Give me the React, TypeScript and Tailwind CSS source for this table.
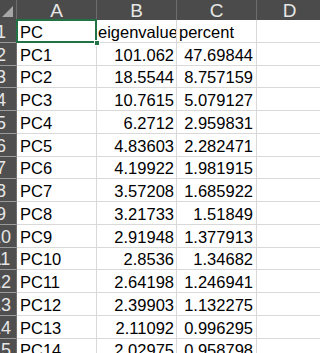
import React from "react";

const rows: [string, string, string][] = [
  ["PC", "eigenvalue", "percent"],
  ["PC1", "101.062", "47.69844"],
  ["PC2", "18.5544", "8.757159"],
  ["PC3", "10.7615", "5.079127"],
  ["PC4", "6.2712", "2.959831"],
  ["PC5", "4.83603", "2.282471"],
  ["PC6", "4.19922", "1.981915"],
  ["PC7", "3.57208", "1.685922"],
  ["PC8", "3.21733", "1.51849"],
  ["PC9", "2.91948", "1.377913"],
  ["PC10", "2.8536", "1.34682"],
  ["PC11", "2.64198", "1.246941"],
  ["PC12", "2.39903", "1.132275"],
  ["PC13", "2.11092", "0.996295"],
  ["PC14", "2.02975", "0.958798"],
];

export default function App() {
  return (
    <div
      className="w-[320px] h-[353px] overflow-hidden bg-white text-black"
      style={{ fontFamily: '"Liberation Sans", Arial, sans-serif' }}
    >
      {/* column header */}
      <div className="flex h-[20px] bg-[#4b4b4b] text-[#e6e6e6] text-[19px] leading-[21px]">
        <div className="relative w-[17px] shrink-0 border-r border-[#6e6e6e]">
          <div className="absolute right-[3px] bottom-[3px] w-0 h-0 border-l-[11px] border-l-transparent border-b-[11px] border-b-[#a6a6a6]" />
        </div>
        {["A", "B", "C"].map((c) => (
          <div
            key={c}
            className="w-[80px] shrink-0 border-r border-[#6e6e6e] text-center"
          >
            {c}
          </div>
        ))}
        <div className="flex-1 text-center pl-[2px]">D</div>
      </div>
      {rows.map((r, i) => (
        <div key={i} className="flex h-[22.77px] text-[16.5px] leading-[20px]">
          <div className="relative w-[17px] shrink-0 overflow-hidden bg-[#4f4f4f] border-r border-[#6e6e6e] border-b border-b-[#9a9a9a]">
            <div className="absolute left-[-15px] w-[32px] top-0 h-full flex items-end justify-center text-[#e6e6e6] text-[18px]">
              {i + 1}
            </div>
          </div>
          <div className="relative w-[80px] shrink-0 border-r border-b border-[#d9d9d9] flex items-end pl-[3px] whitespace-nowrap">
            {r[0]}
            {i === 0 && (
              <>
                <div className="absolute left-[-1px] top-[-1px] right-[-1px] bottom-[-1px] border-2 border-[#217346] pointer-events-none" />
                <div className="absolute right-[-4px] bottom-[-4px] w-[6px] h-[6px] bg-[#217346] border border-white z-10" />
              </>
            )}
          </div>
          <div
            className={
              "w-[80px] shrink-0 border-r border-b border-[#d9d9d9] flex items-end whitespace-nowrap overflow-hidden " +
              (i === 0 ? "justify-start pl-[1px]" : "justify-end pr-[2px]")
            }
          >
            {r[1]}
          </div>
          <div
            className={
              "w-[80px] shrink-0 border-r border-b border-[#d9d9d9] flex items-end whitespace-nowrap overflow-hidden " +
              (i === 0 ? "justify-start pl-[2px]" : "justify-end pr-[3px]")
            }
          >
            {r[2]}
          </div>
          <div className="flex-1 border-b border-[#d9d9d9]" />
        </div>
      ))}
    </div>
  );
}
